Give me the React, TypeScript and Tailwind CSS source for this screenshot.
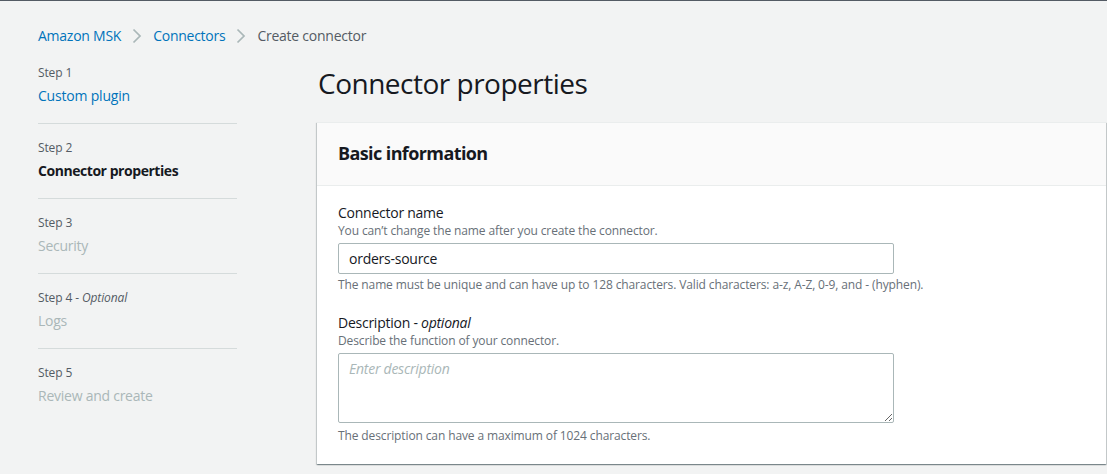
import React from "react";

const steps = [
  { label: "Step 1", optional: false, title: "Custom plugin", state: "link" },
  { label: "Step 2", optional: false, title: "Connector properties", state: "active" },
  { label: "Step 3", optional: false, title: "Security", state: "disabled" },
  { label: "Step 4", optional: true, title: "Logs", state: "disabled" },
  { label: "Step 5", optional: false, title: "Review and create", state: "disabled" },
];

function Chevron() {
  return (
    <svg width="16" height="16" viewBox="0 0 16 16" className="mx-[8px]" aria-hidden>
      <path d="M4.5 1.5 L11 8 L4.5 14.5" fill="none" stroke="#aab7b8" strokeWidth="1.75" />
    </svg>
  );
}

export default function App() {
  return (
    <div
      className="min-h-screen bg-[#f2f3f3] text-[#16191f]"
      style={{ fontFamily: '"Open Sans", "Noto Sans", Arial, sans-serif' }}
    >
      <div className="h-px bg-[#545b64]" />
      <div className="pl-[38px]">
        <nav className="flex items-center pt-[25px] text-[14px] leading-[20px] tracking-[-0.25px]">
          <span className="text-[#0073bb]">Amazon MSK</span>
          <Chevron />
          <span className="text-[#0073bb]">Connectors</span>
          <Chevron />
          <span className="text-[#545b64]">Create connector</span>
        </nav>
        <div className="mt-[19px] flex">
          <aside className="w-[199px] shrink-0">
            {steps.map((s, i) => (
              <div
                key={s.label}
                className={`${i === 0 ? "" : "pt-4"} ${i < steps.length - 1 ? "border-b border-[#d5dbdb] pb-[17px]" : ""}`}
              >
                <div className="text-[12px] leading-[16px] tracking-[-0.12px] text-[#545b64]">
                  {s.label}
                  {s.optional && (
                    <>
                      {" - "}
                      <i>Optional</i>
                    </>
                  )}
                </div>
                <div
                  className={`mt-[5px] text-[14px] leading-[20px] ${
                    s.state === "link"
                      ? "tracking-[-0.2px] text-[#0073bb]"
                      : s.state === "active"
                      ? "font-bold tracking-[-0.45px] text-[#16191f]"
                      : "tracking-[-0.25px] text-[#aab7b8]"
                  }`}
                >
                  {s.title}
                </div>
              </div>
            ))}
          </aside>
          <main className="ml-[80px] w-[789px] shrink-0">
            <h1 className="pl-px text-[28px] leading-[36px] font-normal tracking-[-0.5px] text-[#16191f]">
              Connector properties
            </h1>
            <section className="mt-[21px] border-t border-[#eaeded] bg-white shadow-[0_1px_1px_0_rgba(0,28,36,0.3),1px_1px_1px_0_rgba(0,28,36,0.15),-1px_1px_1px_0_rgba(0,28,36,0.15)]">
              <div className="border-b border-[#eaeded] bg-[#fafafa] px-5 pt-[18px] pb-5">
                <h2 className="pl-px text-[18px] leading-[24px] font-bold tracking-[-0.6px]">Basic information</h2>
              </div>
              <div className="px-[21px] pt-[17px] pb-[20px]">
                <div className="text-[14px] leading-[20px] tracking-[-0.25px]">Connector name</div>
                <div className="text-[12px] leading-[16px] tracking-[-0.12px] text-[#687078]">
                  You can’t change the name after you create the connector.
                </div>
                <div className="mt-1 flex h-[31px] w-[556px] items-center rounded-[2px] border border-[#aab7b8] bg-white px-[10px] text-[14px] tracking-[-0.25px]">
                  orders-source
                </div>
                <div className="mt-[3px] text-[12px] leading-[16px] tracking-[-0.12px] text-[#687078]">
                  The name must be unique and can have up to 128 characters. Valid characters: a-z, A-Z, 0-9, and - (hyphen).
                </div>
                <div className="mt-5 text-[14px] leading-[20px] tracking-[-0.25px]">
                  Description - <i>optional</i>
                </div>
                <div className="text-[12px] leading-[16px] tracking-[-0.12px] text-[#687078]">
                  Describe the function of your connector.
                </div>
                <textarea
                  className="mt-1 block h-[70px] w-[556px] rounded-[2px] border border-[#aab7b8] bg-white px-[10px] py-[4px] text-[14px] leading-[22px] tracking-[-0.25px] outline-none placeholder:italic placeholder:text-[#aab7b8]"
                  placeholder="Enter description"
                />
                <div className="mt-[5px] text-[12px] leading-[16px] tracking-[-0.12px] text-[#687078]">
                  The description can have a maximum of 1024 characters.
                </div>
              </div>
            </section>
          </main>
        </div>
      </div>
    </div>
  );
}
